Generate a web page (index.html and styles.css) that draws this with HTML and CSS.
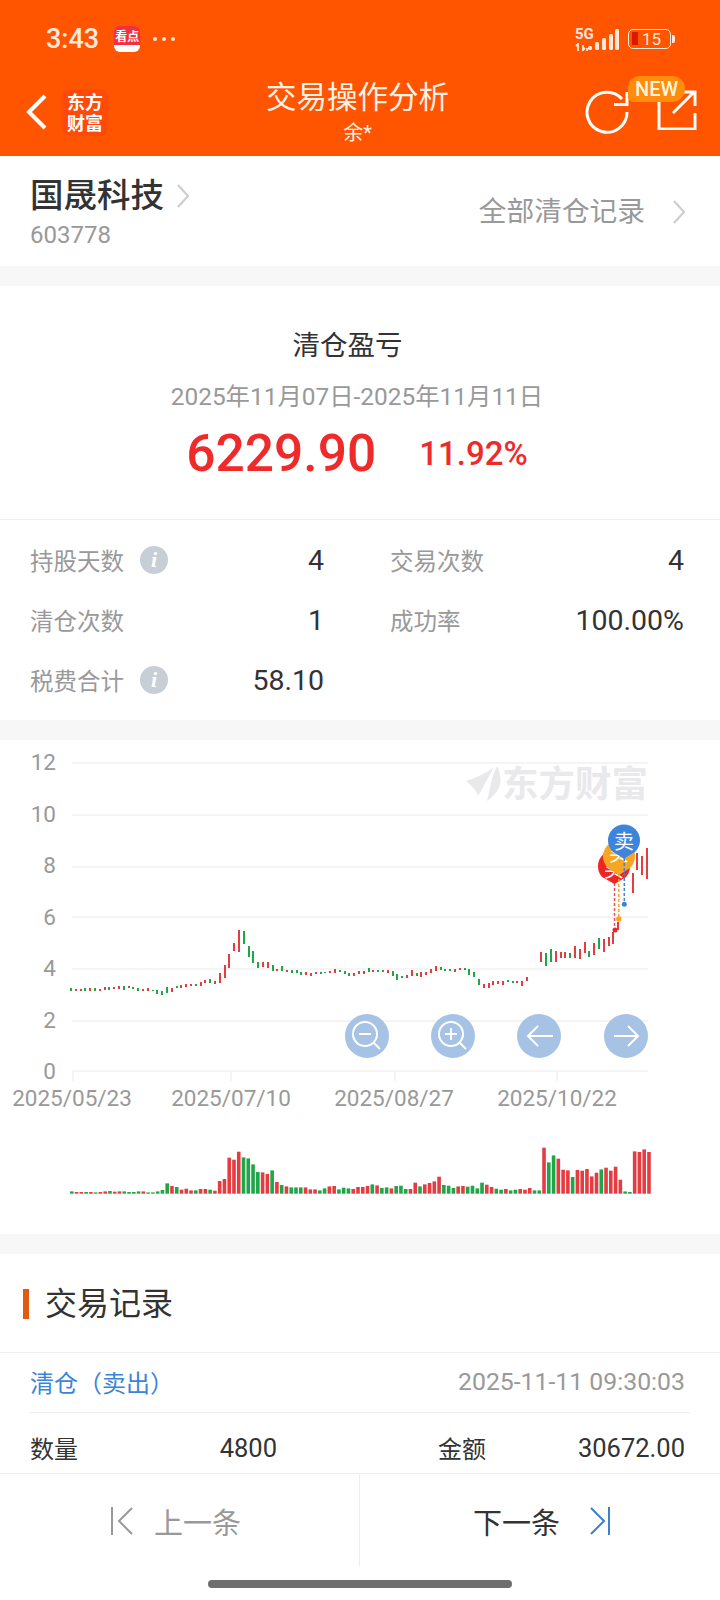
FILE: index.html
```html
<!DOCTYPE html>
<html lang="zh-CN">
  <head>
    <meta charset="UTF-8" />
    <meta name="viewport" content="width=device-width, initial-scale=1.0" />
    <title>交易操作分析</title>
    <link rel="stylesheet" href="styles.css">
  </head>
  <body>
    <header class="top">
      <div class="status">
        <div class="status-left">
          <span class="time">3:43</span>
          <span class="app-badge"><span class="app-badge-text">看点</span></span>
          <span class="status-dots">
            <i></i><i></i><i></i>
          </span>
        </div>
        <div class="status-right">
          <span class="net">
            <span class="net-label">5G</span>
            <svg class="net-arrows" width="13" height="8" viewBox="0 0 13 8">
              <path d="M3 0V8M1 3 3 1M8 2V8M8 7 10 5M12 5V8" stroke="#fde8da" stroke-width="1.800" fill="none" />
            </svg>
          </span>
          <svg class="signal" width="31" height="22" viewBox="0 0 31 22">
            <rect x="0" y="18" width="4" height="4" rx="1.500" />
            <rect x="7" y="14" width="4" height="8" rx="1.500" />
            <rect x="14" y="10" width="4" height="12" rx="1.500" />
            <rect x="21" y="6" width="4" height="16" rx="1.500" />
            <rect x="27" y="1" width="4" height="21" rx="1.500" />
          </svg>
          <span class="battery"><span class="battery-level"></span>15</span>
          <span class="battery-cap"></span>
        </div>
      </div>
      <nav class="nav">
        <div class="nav-left">
          <svg class="back" width="24" height="38" viewBox="0 0 24 38">
            <path d="M21 3 5 19l16 16" fill="none" stroke="#fff" stroke-width="4" />
          </svg>
          <div class="logo">东方<br />财富</div>
        </div>
        <div class="nav-title">
          <div class="nav-title-main">交易操作分析</div>
          <div class="nav-title-sub">余*</div>
        </div>
        <div class="nav-right">
          <svg class="refresh" width="46" height="46" viewBox="0 0 46 46">
            <path d="M38 10A20 20 0 1 0 43 23" fill="none" stroke="#fff" stroke-width="3" />
            <path d="M30 15.500H43V3" fill="none" stroke="#fff" stroke-width="3" />
          </svg>
          <svg class="share" width="42" height="42" viewBox="0 0 42 42">
            <path d="M21 4H4V41H40V25" fill="none" stroke="#fff" stroke-width="3" />
            <path d="M18 25 39 4M25 4H40V18" fill="none" stroke="#fff" stroke-width="3" />
          </svg>
          <span class="new-badge">NEW</span>
        </div>
      </nav>
    </header>

    <section class="stock">
      <div>
        <div class="stock-name">
          国晟科技
          <svg width="12" height="24" viewBox="0 0 12 24"><path d="m1 1 10 11L1 23" class="chevron" /></svg>
        </div>
        <div class="stock-code">603778</div>
      </div>
      <div class="stock-link">
        全部清仓记录
        <svg width="12" height="24" viewBox="0 0 12 24"><path d="m1 1 10 11L1 23" class="chevron" /></svg>
      </div>
    </section>

    <section class="summary">
      <div class="summary-title">清仓盈亏</div>
      <div class="summary-dates">2025年11月07日-2025年11月11日</div>
      <div class="summary-result">
        <span class="result-value">6229.90</span>
        <span class="result-rate">11.92%</span>
      </div>
    </section>

    <section class="stats">
      <div class="stat">
        <span class="stat-label">持股天数</span><span class="info">i</span>
        <span class="stat-value">4</span>
      </div>
      <div class="stat">
        <span class="stat-label">交易次数</span>
        <span class="stat-value">4</span>
      </div>
      <div class="stat">
        <span class="stat-label">清仓次数</span>
        <span class="stat-value">1</span>
      </div>
      <div class="stat">
        <span class="stat-label">成功率</span>
        <span class="stat-value">100.00%</span>
      </div>
      <div class="stat">
        <span class="stat-label">税费合计</span><span class="info">i</span>
        <span class="stat-value">58.10</span>
      </div>
    </section>

    <section class="chart">
      <!-- viewBox uses page coordinates, the section starts at y=740 -->
      <svg id="chart" width="720" height="494" viewBox="0 740 720 494">
        <g class="grid">
          <path d="M72 763H648M72 815H648M72 867H648M72 917H648M72 969H648M72 1021H648M72 1071H648" />
          <path d="M73 1071V1081M231 1071V1081M395 1071V1081M557 1071V1081" />
        </g>
        <g class="axis-y">
          <text x="56" y="770">12</text>
          <text x="56" y="822">10</text>
          <text x="56" y="873">8</text>
          <text x="56" y="925">6</text>
          <text x="56" y="976">4</text>
          <text x="56" y="1028">2</text>
          <text x="56" y="1079">0</text>
        </g>
        <g class="axis-x">
          <text x="72" y="1106">2025/05/23</text>
          <text x="231" y="1106">2025/07/10</text>
          <text x="394" y="1106">2025/08/27</text>
          <text x="557" y="1106">2025/10/22</text>
        </g>
        <g class="mark">
          <path d="M497 766C506 784 496 795 487 801 490 790 491 778 497 766Z" />
          <path d="M466 781C476 778 488 772 494 767 488 778 484 786 478 796 476 790 472 786 466 781Z" />
          <text x="648" y="797" text-anchor="end">东方财富</text>
        </g>
        <g id="candles"></g>
        <g id="vols"></g>

        <g class="zoom-btn">
          <circle cx="367" cy="1036" r="22" />
          <circle class="glyph" cx="365" cy="1034" r="12" />
          <path class="glyph" d="M359 1034H371M374 1043 380 1049" />
          <circle cx="453" cy="1036" r="22" />
          <circle class="glyph" cx="451" cy="1034" r="12" />
          <path class="glyph" d="M445 1034H457M451 1028V1040M460 1043 466 1049" />
          <circle cx="539" cy="1036" r="22" />
          <path class="glyph" d="M528 1036H553M538 1026 528 1036 538 1046" />
          <circle cx="626" cy="1036" r="22" />
          <path class="glyph" d="M614 1036H638M628 1026 638 1036 628 1046" />
        </g>

        <g class="pin pin-buy">
          <path class="pin-line" d="M614.500 883V928" />
          <circle cx="615" cy="930" r="2.500" />
          <path d="M602 877A16 16 0 1 1 626 877L614.500 884Z" />
          <text x="614" y="877">买</text>
        </g>
        <g class="pin pin-mid">
          <path class="pin-line" d="M618.800 874V917" />
          <circle cx="618.800" cy="919" r="2.700" />
          <path d="M608 868A16 16 0 1 1 630 868L619 875Z" />
          <text x="619" y="861">买</text>
        </g>
        <g class="pin pin-sell">
          <path class="pin-line" d="M624.300 858V902" />
          <circle cx="624.300" cy="904.300" r="2.500" />
          <path d="M613 852A16 16 0 1 1 635 852L624 858.500Z" />
          <text x="624" y="849">卖</text>
        </g>
      </svg>
    </section>

    <section class="records">
      <h2 class="records-title">交易记录</h2>
      <div class="record-head">
        <span class="record-type">清仓（卖出）</span>
        <span class="record-time">2025-11-11 09:30:03</span>
      </div>
      <div class="record-row">
        <div class="record-cell record-cell-left">
          <span>数量</span><span class="record-value">4800</span>
        </div>
        <div class="record-cell record-cell-right">
          <span>金额</span><span class="record-value">30672.00</span>
        </div>
      </div>
    </section>

    <footer class="pager">
      <div class="pager-btn pager-prev">
        <svg width="24" height="30" viewBox="0 0 24 30"><path d="M2 1V29M22 2 9 15l13 13" fill="none" stroke="#999" stroke-width="2" /></svg>
        上一条
      </div>
      <div class="pager-btn pager-next">
        下一条
        <svg width="24" height="30" viewBox="0 0 24 30"><path d="M3 2 16 15 3 28" fill="none" stroke="#3b7fd0" stroke-width="2" /><path d="M21 1V29" fill="none" stroke="#3b7fd0" stroke-width="2" /></svg>
      </div>
    </footer>
    <div class="home-bar"><span></span></div>

    <script src="chart.js"></script>
  </body>
</html>
```

FILE: styles.css
```css
* {
  box-sizing: border-box;
}

body {
  margin: 0;
  width: 720px;
  height: 1600px;
  overflow: hidden;
  background-color: #fff;
  color: #333;
  font-family: Roboto, 'Noto Sans CJK SC', sans-serif;
}

/* header */
.top {
  height: 156px;
  background-color: #ff5500;
  color: #fff;
}

.status {
  display: flex;
  align-items: center;
  justify-content: space-between;
  height: 73px;
  padding: 5px 45px 0 46px;
}

.status-left,
.status-right {
  display: flex;
  align-items: center;
}

.time {
  font-size: 27px;
  font-weight: 500;
  color: #fde8da;
}

.app-badge {
  display: block;
  width: 26px;
  height: 26px;
  margin-left: 15px;
  border-radius: 6px;
  background: linear-gradient(#f2303f 0 72%, #fff 72%);
  overflow: hidden;
}

.app-badge-text {
  display: block;
  font-size: 12px;
  line-height: 22px;
  font-weight: 700;
  text-align: center;
  color: #fff;
}

.status-dots {
  display: flex;
  gap: 5px;
  margin-left: 13px;
}

.status-dots i {
  width: 4px;
  height: 4px;
  border-radius: 50%;
  background-color: #fde8da;
}

.net {
  display: flex;
  flex-direction: column;
  gap: 3px;
  width: 13px;
}

.net-label {
  font-size: 15px;
  line-height: 12px;
  font-weight: 700;
  white-space: nowrap;
  color: #fde8da;
}

.signal {
  fill: #fde8da;
}

.battery {
  position: relative;
  width: 43px;
  height: 20px;
  margin-left: 9px;
  padding-left: 13px;
  border: 1.5px solid #fde8da;
  border-radius: 5px;
  font-size: 17px;
  line-height: 18px;
  color: #fde8da;
}

.battery-level {
  position: absolute;
  left: 3px;
  top: 2px;
  width: 6px;
  height: 13px;
  background-color: #d91a00;
}

.battery-cap {
  width: 3px;
  height: 8px;
  margin-left: 1px;
  border-radius: 0 2px 2px 0;
  background-color: #fde8da;
}

.nav {
  display: grid;
  grid-template-columns: 1fr auto 1fr;
  align-items: center;
  height: 83px;
  padding: 0 23px 5px 24px;
}

.nav-left {
  display: flex;
  align-items: center;
}

.logo {
  width: 46px;
  height: 47px;
  margin-left: 14px;
  padding-top: 2px;
  border-radius: 8px;
  background-color: #ff4a0c;
  font-family: 'Noto Sans CJK SC', sans-serif;
  font-size: 18px;
  line-height: 21px;
  font-weight: 700;
  text-align: center;
}

.nav-title {
  margin-right: 6px;
  text-align: center;
  color: #fff2e6;
}

.nav-title-main {
  font-size: 30.500px;
  line-height: 42px;
  margin-top: -2px;
}

.nav-title-sub {
  margin-top: 2px;
  font-size: 20px;
  line-height: 24px;
}

.nav-right {
  position: relative;
  display: flex;
  align-items: center;
  justify-content: flex-end;
  gap: 25px;
}

.share {
  margin-bottom: 6px;
}

.new-badge {
  position: absolute;
  right: 12px;
  top: -12px;
  width: 57px;
  height: 26px;
  border-radius: 13px 14px 14px 6px;
  background-color: #ff8c0a;
  font-size: 20px;
  line-height: 26px;
  font-weight: 500;
  text-align: center;
  color: #fff5da;
}

/* stock row */
.stock {
  display: flex;
  align-items: flex-start;
  justify-content: space-between;
  height: 110px;
  padding: 16px 35px 0 30px;
}

.stock-name {
  display: flex;
  align-items: center;
  gap: 13px;
  font-size: 33.500px;
  line-height: 48px;
  font-weight: 500;
}

.stock-code {
  margin-top: -2px;
  font-size: 24px;
  line-height: 34px;
  color: #999;
}

.stock-link {
  display: flex;
  align-items: center;
  gap: 28px;
  margin-top: 19px;
  font-size: 27.700px;
  line-height: 42px;
  color: #999;
}

.chevron {
  fill: none;
  stroke: #ccc;
  stroke-width: 2;
}

/* summary */
.summary {
  height: 254px;
  border-top: 20px solid #f7f7f7;
  border-bottom: 1px solid #eee;
  padding-top: 40px;
  text-align: center;
}

.summary-title {
  margin-right: 25px;
  font-size: 27.500px;
  line-height: 40px;
}

.summary-dates {
  margin-top: 15px;
  margin-right: 6px;
  font-size: 24.400px;
  line-height: 32px;
  color: #999;
}

.summary-result {
  display: flex;
  align-items: center;
  justify-content: center;
  gap: 43px;
  margin-top: 11px;
  margin-right: 6px;
  color: #ee2a2a;
  line-height: 60px;
}

.result-value {
  font-size: 51.500px;
  font-weight: 500;
}

.result-rate {
  font-size: 33px;
  font-weight: 500;
}

/* stats */
.stats {
  display: grid;
  grid-template-columns: 294px 294px;
  grid-auto-rows: 60px;
  column-gap: 66px;
  height: 200px;
  padding: 10px 0 0 30px;
}

.stat {
  display: flex;
  align-items: center;
}

.stat-label {
  font-size: 23.500px;
  color: #999;
}

.stat-value {
  margin-left: auto;
  font-size: 28.500px;
  color: #333;
}

.info {
  width: 28px;
  height: 28px;
  margin-left: 16px;
  border-radius: 50%;
  background-color: #c8ced6;
  font-family: 'Liberation Serif', serif;
  font-size: 22px;
  line-height: 28px;
  font-style: italic;
  font-weight: 700;
  text-align: center;
  color: #fff;
}

/* chart */
.chart {
  height: 514px;
  border-top: 20px solid #f7f7f7;
}

#chart {
  display: block;
}

.grid path {
  fill: none;
  stroke: #f4f4f4;
  stroke-width: 2;
}

.axis-y text,
.axis-x text {
  font-size: 22.500px;
  fill: #999;
}

.axis-y text {
  text-anchor: end;
}

.axis-x text {
  text-anchor: middle;
}

.mark {
  fill: #e9e9ec;
}

.mark text {
  font-family: 'Noto Sans CJK SC', sans-serif;
  font-size: 36.500px;
  font-weight: 700;
}

.up {
  fill: #e63b40;
}

.down {
  fill: #1fa648;
}

.zoom-btn circle {
  fill: #a6c3e6;
}

.zoom-btn .glyph {
  fill: none;
  stroke: #fff;
  stroke-width: 2;
}

.pin text {
  font-family: 'Noto Sans CJK SC', sans-serif;
  font-size: 20px;
  fill: #fff;
  text-anchor: middle;
}

.pin-line {
  fill: none;
  stroke-width: 1.500;
  stroke-dasharray: 3 2;
}

.pin-buy {
  fill: #ee2525;
}

.pin-buy .pin-line {
  stroke: #ee5050;
}

.pin-mid {
  fill: #f5a623;
}

.pin-mid .pin-line {
  stroke: #f5a623;
}

.pin-sell {
  fill: #3d84dc;
}

.pin-sell .pin-line {
  stroke: #3d84dc;
}

/* records */
.records {
  height: 239px;
  border-top: 20px solid #f7f7f7;
}

.records-title {
  display: flex;
  align-items: center;
  height: 99px;
  margin: 0;
  padding: 0 0 4px 45px;
  border-bottom: 1px solid #eee;
  position: relative;
  font-size: 32px;
  font-weight: 400;
}

.records-title::before {
  content: '';
  position: absolute;
  left: 23px;
  top: 35px;
  width: 6px;
  height: 30px;
  background-color: #e05a12;
}

.record-head {
  display: flex;
  align-items: center;
  justify-content: space-between;
  height: 60px;
  margin: 0 30px 0 29px;
  padding: 0 0 2px 1px;
  border-bottom: 1px solid #eee;
}

.record-type {
  font-size: 24px;
  color: #3b85d6;
}

.record-time {
  margin-right: 5px;
  font-size: 24.800px;
  color: #999;
}

.record-row {
  display: flex;
  align-items: center;
  height: 59px;
  padding: 10px 0 0 30px;
  font-size: 24px;
}

.record-cell {
  display: flex;
  align-items: center;
  justify-content: space-between;
}

.record-cell-left {
  width: 247px;
}

.record-cell-right {
  width: 247px;
  margin-left: 161px;
}

.record-value {
  font-size: 25.500px;
}

/* pager */
.pager {
  display: flex;
  height: 96px;
  border-top: 1px solid #eee;
  font-size: 29px;
}

.pager-btn {
  display: flex;
  align-items: center;
  width: 360px;
  height: 93px;
}

.pager-prev {
  justify-content: flex-start;
  gap: 20px;
  padding-left: 110px;
  border-right: 1px solid #eee;
  color: #999;
}

.pager-next {
  justify-content: flex-start;
  gap: 28px;
  padding-left: 113px;
  color: #333;
}

.home-bar {
  display: flex;
  justify-content: center;
  padding-top: 11px;
}

.home-bar span {
  width: 304px;
  height: 8px;
  border-radius: 4px;
  background-color: #6e6e6e;
}
```

FILE: chart.js
```js
// page y of each candle: [top, bottom, direction], null where nothing is drawn
const candles = [
  [988,991,0],[989,991,1],[989,991,1],[988,991,0],[988,991,1],[988,991,0],[989,991,1],[987,990,1],
  [987,990,0],[987,989,1],[986,989,1],[986,990,0],[986,988,1],[987,989,0],[988,991,0],[989,991,1],
  [988,991,1],[990,991,0],[990,994,0],[991,995,0],[987,993,0],[988,992,1],[986,988,0],[985,988,1],
  [984,987,1],[984,986,1],[984,986,0],[982,986,1],[980,983,1],[979,983,0],[981,984,1],[973,983,1],
  [965,978,1],[954,968,1],[943,951,1],[930,952,1],[931,944,0],[946,957,0],[951,963,0],[962,968,0],
  [962,967,1],[962,968,1],[965,971,0],[969,971,1],[966,971,0],[970,972,1],[970,973,0],[970,973,0],
  [972,975,0],[972,975,1],[973,976,1],[972,974,1],[972,974,0],[972,973,0],[971,973,1],[969,973,1],
  [970,972,0],[971,974,0],[973,976,0],[973,976,1],[971,974,1],[971,974,1],[968,972,0],[970,972,1],
  [970,972,0],[970,972,0],[970,973,1],[971,976,0],[974,980,0],[976,978,0],[975,978,1],[970,976,1],
  [973,976,0],[972,977,1],[972,975,1],[969,973,1],[966,971,1],[967,970,0],[969,971,0],[969,971,0],
  [969,972,1],[968,970,1],[968,970,0],[969,975,0],[972,977,0],[979,985,0],[984,988,1],[983,988,1],
  [981,985,1],[981,984,1],[981,985,1],[980,982,0],[981,983,0],[981,983,1],[981,986,1],[977,981,1],
  null,null,
  [952,962,1],[953,966,0],[949,962,0],[951,962,1],[952,958,1],[952,958,1],[953,958,0],[946,958,1],
  [949,959,1],[942,953,1],[951,957,0],[943,955,1],[938,949,0],[939,952,1],[937,946,1],[932,944,1],
  [922,930,1],
  null,null,
  [873,893,1],[853,870,1],[856,875,1],[848,879,1],
];

// bar heights, negative for a falling day
const vols = [
  -2.3,1.7,1.7,-1.7,1.7,-1.3,1.7,2.3,-2.7,2,2.3,-2.3,-1.7,-1.7,-2.3,2.3,-1.3,-1.3,-2.3,-3.7,-10.3,7.7,
  -6.7,4,5,3.3,-3.3,4.7,4.7,-4,3,12.7,14.7,36,34,42,-36.3,-35.3,-29.3,-21.7,21.3,19.7,-23.3,11.7,-8.7,
  7.3,-6.3,-6.3,-6.3,6.3,4.3,4.3,-3.3,-5.3,7.3,7.7,-4.3,-6,-5.3,4.7,6.7,
  6.7,7.7,-9.3,8.3,-5.7,-6.3,5.3,-7.7,-8,-4.7,4.7,11,-7.3,9.3,10.7,12.3,17,-8.7,-8,-5.7,7.3,7.7,-7,-8,
  -5.3,-11,9,6.7,-5,-4,4.7,-3.3,-4,4.7,4,5.7,-3.3,-3.3,46,-31.3,-38.3,35,24,23.3,-16.7,23.7,23,24.7,
  17.3,21,-24.3,26,23,27,14,-2.3,-1.7,42.3,41.7,44.3,41.7,
];

function addRect(group, x, y, width, height, isUp) {
  const rect = document.createElementNS('http://www.w3.org/2000/svg', 'rect');
  rect.setAttribute('x', x);
  rect.setAttribute('y', y);
  rect.setAttribute('width', width);
  rect.setAttribute('height', height);
  rect.setAttribute('class', isUp ? 'up' : 'down');
  group.appendChild(rect);
}

const candleGroup = document.getElementById('candles');
candles.forEach(function (candle, i) {
  if (!candle) return;
  addRect(candleGroup, Math.round(71 + 4.8 * i) - 1, candle[0], 2, candle[1] - candle[0], candle[2]);
});

const volGroup = document.getElementById('vols');
vols.forEach(function (vol, i) {
  const height = Math.abs(vol);
  addRect(volGroup, 70 + 4.77 * i, 1193.7 - height, 3.6, height, vol > 0);
});
```
